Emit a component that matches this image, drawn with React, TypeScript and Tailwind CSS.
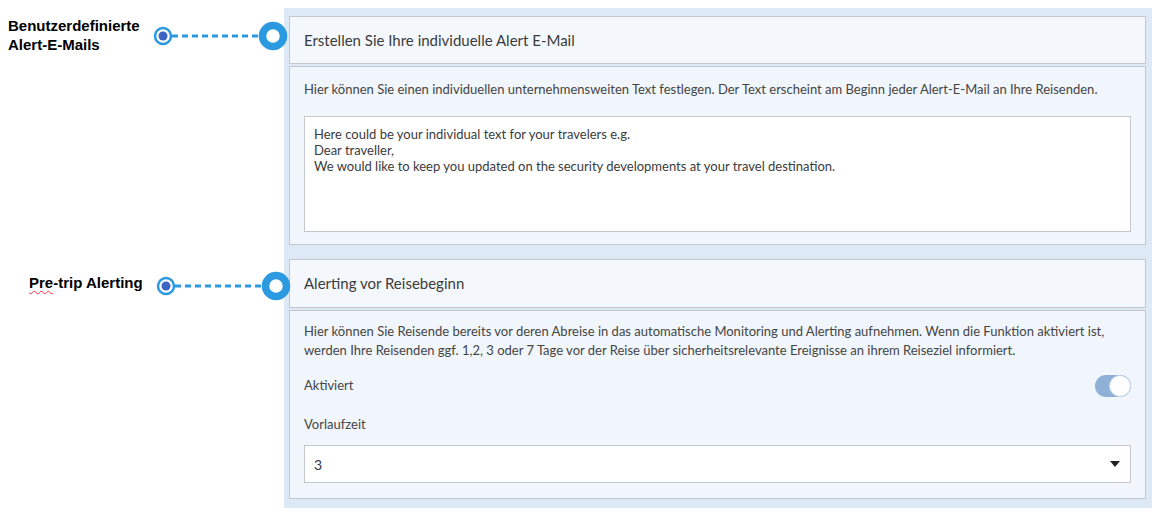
import React from "react";

const font = { fontFamily: '"Source Sans Pro", Lato, "Noto Sans", sans-serif' };

function Callout({ top, smallX, bigX }: { top: number; smallX: number; bigX: number }) {
  return (
    <div className="absolute" style={{ top, left: 0, width: 300, height: 40 }}>
      <svg className="absolute left-0 top-0" width="300" height="40" viewBox="0 0 300 40">
        <line x1={smallX + 9} y1="20" x2={bigX - 13} y2="20" stroke="#2b9ae0" strokeWidth="3" strokeDasharray="6 4" />
        <circle cx={smallX} cy="20" r="8" fill="white" stroke="#2b9ae0" strokeWidth="2.5" />
        <circle cx={smallX} cy="20" r="4.5" fill="#3f63c2" />
        <circle cx={bigX} cy="20" r="10.5" fill="white" stroke="#2b9ae0" strokeWidth="7.5" />
      </svg>
    </div>
  );
}

export default function App() {
  return (
    <div className="relative w-[1157px] h-[515px] bg-white overflow-hidden">
      <div className="flex h-full">
        <div className="w-[284px] shrink-0 relative" style={{ fontFamily: '"Liberation Sans", Arial, sans-serif' }}>
          <div className="absolute left-[8px] top-[16px] text-[15px] leading-[19px] font-bold text-black">
            Benutzerdefinierte
            <br />
            Alert-E-Mails
          </div>
          <div className="absolute left-[29px] top-[273px] text-[15px] leading-[19px] font-bold text-black">
            <span className="underline decoration-wavy decoration-red-500 decoration-[1px] underline-offset-2">Pre</span>-trip Alerting
          </div>
        </div>
        <div className="mt-[8px] h-[500px] w-[868px] bg-[#dde9f7] pl-[5px] pr-[6px] pt-[8px]" style={font}>
          <div className="flex flex-col gap-[2px]">
            <div className="h-[48px] border border-[#c4c8cc] bg-[#f4f8fc] flex items-center px-[14px] text-[15px] text-[#3b3b3b]">
              Erstellen Sie Ihre individuelle Alert E-Mail
            </div>
            <div className="h-[179px] border border-[#c4c8cc] bg-[#f1f6fc] px-[14px] pt-[13px]">
              <p className="text-[13px] leading-[19px] text-[#444]">
                Hier können Sie einen individuellen unternehmensweiten Text festlegen. Der Text erscheint am Beginn jeder Alert-E-Mail an Ihre Reisenden.
              </p>
              <div className="mt-[17px] h-[116px] border border-[#c4c8cc] bg-white px-[9px] pt-[9px] text-[13px] leading-[16px] text-[#3b3b3b]">
                <div>Here could be your individual text for your travelers e.g.</div>
                <div>Dear traveller,</div>
                <div>We would like to keep you updated on the security developments at your travel destination.</div>
              </div>
            </div>
          </div>
          <div className="mt-[14px] flex flex-col gap-[2px]">
            <div className="h-[49px] border border-[#c4c8cc] bg-[#f4f8fc] flex items-center px-[14px] text-[15px] text-[#3b3b3b]">
              Alerting vor Reisebeginn
            </div>
            <div className="h-[189px] border border-[#c4c8cc] bg-[#f1f6fc] px-[14px] pt-[11px]">
              <p className="text-[13px] leading-[19px] text-[#444]">
                Hier können Sie Reisende bereits vor deren Abreise in das automatische Monitoring und Alerting aufnehmen. Wenn die Funktion aktiviert ist, werden Ihre Reisenden ggf. 1,2, 3 oder 7 Tage vor der Reise über sicherheitsrelevante Ereignisse an ihrem Reiseziel informiert.
              </p>
              <div className="mt-[15px] flex items-center justify-between h-[22px]">
                <span className="text-[13px] text-[#444]">Aktiviert</span>
                <div className="w-[36px] h-[22px] rounded-full bg-[#8fb1d8] relative">
                  <div className="absolute right-0 top-0 w-[22px] h-[22px] rounded-full bg-white border border-[#c9d6e4]" />
                </div>
              </div>
              <div className="mt-[18px] text-[13px] leading-[19px] text-[#444]">Vorlaufzeit</div>
              <div className="mt-[11px] h-[38px] border border-[#c4c8cc] bg-white flex items-center justify-between pl-[9px] pr-[10px]">
                <span className="text-[14px] text-[#333]">3</span>
                <svg width="10" height="6" viewBox="0 0 10 6">
                  <path d="M0 0 L10 0 L5 6 Z" fill="#222" />
                </svg>
              </div>
            </div>
          </div>
        </div>
      </div>
      <Callout top={16} smallX={163} bigX={273} />
      <Callout top={266} smallX={166} bigX={276} />
    </div>
  );
}
